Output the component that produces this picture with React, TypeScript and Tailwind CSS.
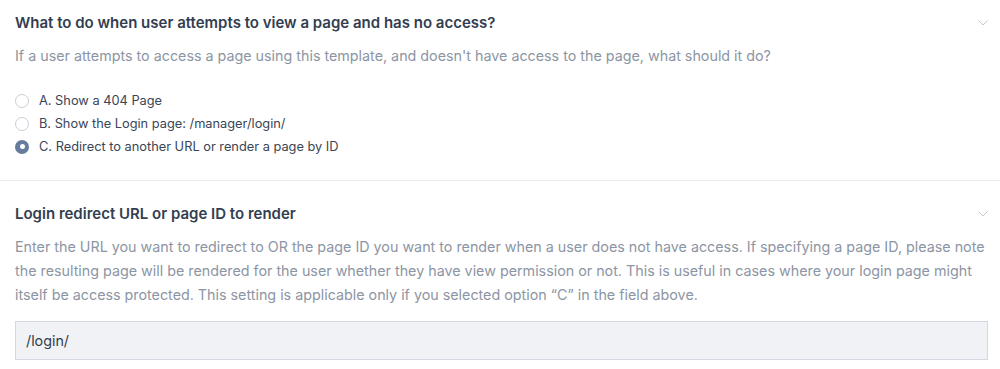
import React from "react";

const Chevron = () => (
  <svg width="10" height="6" viewBox="0 0 10 6" fill="none" className="mr-[-3px]">
    <path d="M0.5 0.5 L5 5 L9.5 0.5" stroke="#c5cad2" strokeWidth="1" />
  </svg>
);

const Radio = ({ checked, label }: { checked?: boolean; label: string }) => (
  <div className="flex items-center h-[23px]">
    {checked ? (
      <span className="w-[14px] h-[14px] rounded-full bg-[#667c9e] flex items-center justify-center">
        <span className="w-[5px] h-[5px] rounded-full bg-white" />
      </span>
    ) : (
      <span className="w-[14px] h-[14px] rounded-full border border-[#c9ced6] bg-white" />
    )}
    <span className="ml-[10px] text-[12.8px] text-[#3a4556]">{label}</span>
  </div>
);

export default function App() {
  return (
    <div className="w-[1000px] h-[369px] bg-white overflow-hidden" style={{ fontFamily: "Inter, 'Noto Sans', sans-serif" }}>
      <div className="px-[15px] pt-[13px] pb-[22px] border-b border-[#e6e9ee]">
        <div className="flex justify-between items-center">
          <h2 className="text-[15px] font-semibold text-[#323e4f] leading-[20px]">What to do when user attempts to view a page and has no access?</h2>
          <Chevron />
        </div>
        <p className="mt-[13px] text-[14.3px] text-[#8c95a4] leading-[20px]">
          If a user attempts to access a page using this template, and doesn't have access to the page, what should it do?
        </p>
        <div className="mt-[23px]">
          <Radio label="A. Show a 404 Page" />
          <Radio label="B. Show the Login page: /manager/login/" />
          <Radio checked label="C. Redirect to another URL or render a page by ID" />
        </div>
      </div>
      <div className="px-[15px] pt-[23px]">
        <div className="flex justify-between items-center">
          <h2 className="text-[15px] font-semibold text-[#323e4f] leading-[20px]">Login redirect URL or page ID to render</h2>
          <Chevron />
        </div>
        <p className="mt-[11px] text-[14.3px] text-[#8c95a4] leading-[24px] mr-[-3px]">
          Enter the URL you want to redirect to OR the page ID you want to render when a user does not have access. If specifying a page ID, please note the resulting page will be rendered for the user whether they have view permission or not. This is useful in cases where your login page might itself be access protected. This setting is applicable only if you selected option “C” in the field above.
        </p>
        <div className="mt-[14px] h-[39px] w-[973px] bg-[#f0f2f6] border border-[#d3d9e3] flex items-center px-[10px] text-[14.3px] text-[#323e4f]">
          /login/
        </div>
      </div>
    </div>
  );
}
